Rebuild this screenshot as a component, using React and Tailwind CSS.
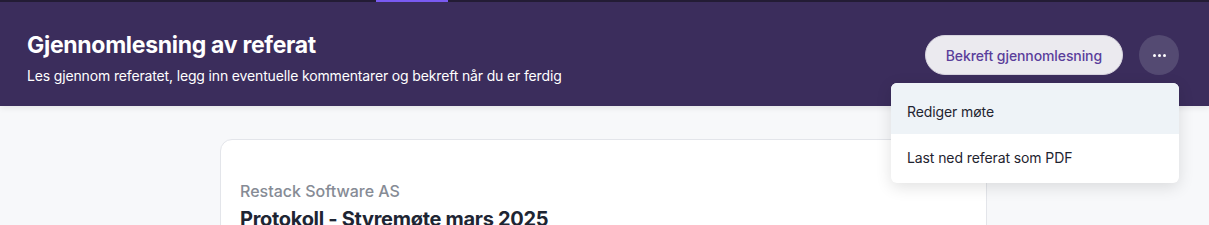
import React from "react";

export default function App() {
  return (
    <div className="w-[1209px] h-[225px] overflow-hidden bg-[#f7f8fa] relative" style={{ fontFamily: "Inter, 'Noto Sans', sans-serif" }}>
      <div className="h-[2px] bg-[#241d36] flex">
        <div className="ml-[376px] w-[72px] h-[2px] bg-[#7b5cf5]" />
      </div>
      <header className="h-[104px] bg-[#3b2d5c] shadow-[0_2px_6px_rgba(0,0,0,0.08)] flex items-start justify-between pl-[27px] pr-[30px] pt-[28px] relative z-10">
        <div className="flex flex-col">
          <h1 className="text-white text-[23px] font-bold leading-[30px] tracking-[-0.3px]">Gjennomlesning av referat</h1>
          <p className="text-white text-[14px] leading-[20px] mt-[6px] tracking-[-0.15px]">Les gjennom referatet, legg inn eventuelle kommentarer og bekreft når du er ferdig</p>
        </div>
        <div className="flex items-center gap-4 mt-[5px] relative">
          <button className="h-[40px] px-[20px] rounded-full bg-[#ebeaef] border border-[#d6d3de] text-[#5a3e9b] text-[14px] font-medium tracking-[-0.1px]">Bekreft gjennomlesning</button>
          <button className="w-[40px] h-[40px] rounded-full bg-[#544a72] flex items-center justify-center gap-[2px]">
            <span className="w-[3px] h-[3px] bg-white rounded-full" />
            <span className="w-[3px] h-[3px] bg-white rounded-full" />
            <span className="w-[3px] h-[3px] bg-white rounded-full" />
          </button>
          <div className="absolute right-0 top-[48px] w-[288px] bg-white rounded-md shadow-[0_4px_16px_rgba(0,0,0,0.12)] overflow-hidden">
            <div className="h-[51px] bg-[#eef3f7] flex items-center pl-[16px] pt-[5px] text-[14px] text-[#1f2430] tracking-[-0.1px]">Rediger møte</div>
            <div className="h-[49px] flex items-center pl-[16px] pb-[2px] text-[14px] text-[#1f2430] tracking-[-0.1px]">Last ned referat som PDF</div>
          </div>
        </div>
      </header>
      <main className="flex justify-start pl-[220px] pt-[33px]">
        <div className="w-[767px] h-[200px] bg-white border border-[#e3e5ea] rounded-[12px] pl-[19px] pt-[41px]">
          <div className="text-[16px] font-medium text-[#868b95] leading-[20px]">Restack Software AS</div>
          <div className="text-[20px] font-bold text-[#1e2533] leading-[28px] mt-[4px] tracking-[-0.3px]">Protokoll - Styremøte mars 2025</div>
        </div>
      </main>
    </div>
  );
}
